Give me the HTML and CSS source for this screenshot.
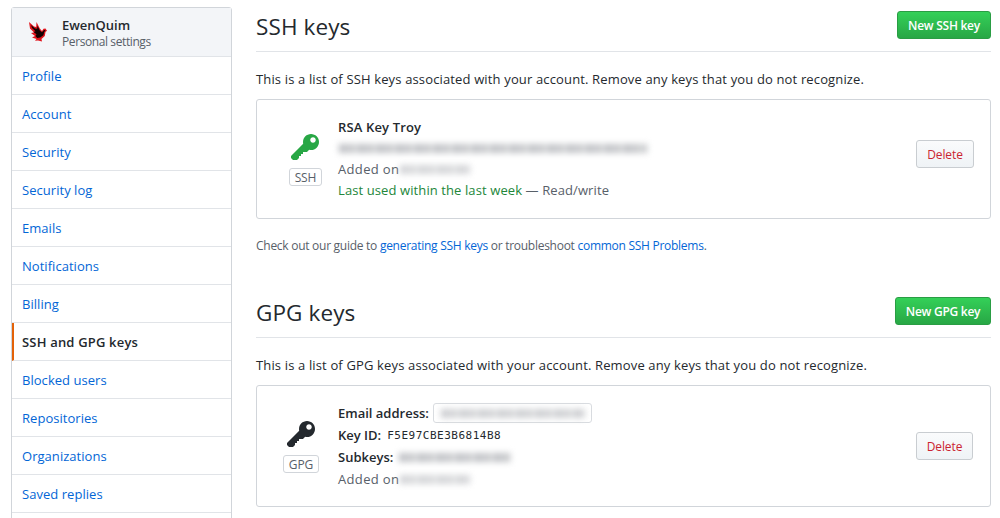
FILE: index.html
```html
<!DOCTYPE html>
<html lang="en">
<head>
<meta charset="utf-8">
<title>SSH and GPG keys</title>
<link rel="stylesheet" href="styles.css">
</head>
<body>
<div class="page">
  <nav class="menu">
    <div class="menu-header">
      <svg class="avatar" viewBox="0 0 20 22" width="20" height="22"><path d="M1 1l5 4.500L8.200 6 8.500 1l3.300 6.500L14 10l1.500-2.200 2-.3 1.500 2.300-1.500 1.200-.7 4-3.300 3L14 20.500 10 19.500l-3 .3 1.500-1.800L4 16.500l3-1.500L3 12l3-.5L2 7.500z" fill="#e0141c"/><path d="M3 4l4 3.500 2.200.2.300-3 2.300 4.800 2.200 1.800 2-2.300h1.500l-1.300 2.200-.8 3-3.200 2.400-3 .4L7.500 15l1-1.800L5.500 11l2-.8L4 7z" fill="#140202"/></svg>
      <div class="who"><strong class="name">EwenQuim</strong><span class="sub">Personal settings</span></div>
    </div>
    <a class="item">Profile</a>
    <a class="item">Account</a>
    <a class="item">Security</a>
    <a class="item">Security log</a>
    <a class="item">Emails</a>
    <a class="item">Notifications</a>
    <a class="item">Billing</a>
    <a class="item selected">SSH and GPG keys</a>
    <a class="item">Blocked users</a>
    <a class="item">Repositories</a>
    <a class="item">Organizations</a>
    <a class="item">Saved replies</a>
  </nav>
  <main class="main">
    <section class="ssh">
      <header class="subhead"><h2 class="title">SSH keys</h2><button class="btn primary new-ssh">New SSH key</button></header>
      <p class="intro">This is a list of SSH keys associated with your account. Remove any keys that you do not recognize.</p>
      <div class="box ssh-box">
        <div class="kind">
          <svg class="key green" viewBox="0 0 14 16" width="28" height="32"><path fill-rule="evenodd" d="M12.830 2.170C12.080 1.420 11.140 1.030 10 1c-1.130.03-2.080.42-2.830 1.170S6.040 3.860 6.010 5c0 .3.03.59.09.89L0 12v1l1 1h2l1-1v-1h1v-1h1v-1h2l1.090-1.110c.3.08.59.110.910.110 1.140-.03 2.080-.42 2.830-1.170S13.970 6.140 14 5c-.03-1.140-.42-2.080-1.170-2.830zM11 5.380c-.77 0-1.380-.61-1.380-1.380 0-.77.61-1.380 1.380-1.380.77 0 1.380.61 1.380 1.380 0 .77-.61 1.380-1.380 1.380z"/></svg>
          <span class="badge">SSH</span>
        </div>
        <div class="details">
          <div class="line"><strong class="key-name">RSA Key Troy</strong></div>
          <div class="line"><span class="redacted fingerprint"></span></div>
          <div class="line muted"><span class="added">Added on</span><span class="redacted date"></span></div>
          <div class="line muted usage"><span class="recent">Last used within the last week</span> — Read/write</div>
        </div>
        <button class="btn danger">Delete</button>
      </div>
      <p class="note">Check out our guide to <a>generating SSH keys</a> or troubleshoot <a>common SSH Problems</a>.</p>
    </section>
    <section class="gpg">
      <header class="subhead"><h2 class="title">GPG keys</h2><button class="btn primary new-gpg">New GPG key</button></header>
      <p class="intro">This is a list of GPG keys associated with your account. Remove any keys that you do not recognize.</p>
      <div class="box gpg-box">
        <div class="kind">
          <svg class="key" viewBox="0 0 14 16" width="28" height="32"><path fill-rule="evenodd" d="M12.830 2.170C12.080 1.420 11.140 1.030 10 1c-1.130.03-2.080.42-2.830 1.170S6.040 3.860 6.010 5c0 .3.03.59.09.89L0 12v1l1 1h2l1-1v-1h1v-1h1v-1h2l1.090-1.110c.3.08.59.110.910.110 1.140-.03 2.080-.42 2.830-1.170S13.970 6.140 14 5c-.03-1.140-.42-2.080-1.170-2.830zM11 5.380c-.77 0-1.380-.61-1.380-1.380 0-.77.61-1.380 1.380-1.380.77 0 1.380.61 1.380 1.380 0 .77-.61 1.380-1.380 1.380z"/></svg>
          <span class="badge">GPG</span>
        </div>
        <div class="details">
          <div class="line"><strong class="label-email">Email address:</strong><span class="email-box"><span class="redacted email"></span></span></div>
          <div class="line"><strong class="label-id">Key ID:</strong><code class="key-id">F5E97CBE3B6814B8</code></div>
          <div class="line"><strong class="label-sub">Subkeys:</strong><span class="redacted subkeys"></span></div>
          <div class="line muted"><span class="added">Added on</span><span class="redacted date"></span></div>
        </div>
        <button class="btn danger">Delete</button>
      </div>
    </section>
  </main>
</div>
</body>
</html>
```
FILE: styles.css
```css
* { box-sizing: border-box; }
body { margin: 0; height: 518px; overflow: hidden; background: #fff; color: #24292e; font: 13px/22px "Open Sans", "Noto Sans", sans-serif; }
a { color: #0366d6; }
strong { font-weight: 600; }
.page { display: flex; gap: 24px; height: 518px; padding: 7px 9px 0 11px; overflow: hidden; white-space: nowrap; }

.menu { flex: none; width: 221px; height: 530px; border: 1px solid #d1d5da; border-radius: 3px; }
.menu-header { display: flex; gap: 14px; height: 49px; padding: 13px 0 0 16px; background: #f3f5f8; border-bottom: 1px solid #e1e4e8; }
.avatar { flex: none; }
.who { display: flex; flex-direction: column; margin-top: -4px; }
.name { line-height: 17px; }
.sub { font-size: 12px; line-height: 15px; color: #586069; letter-spacing: -0.4px; }
.item { display: block; height: 38px; padding: 9px 10px; line-height: 21px; letter-spacing: 0.04px; border-bottom: 1px solid #e1e4e8; }
.selected { padding-left: 8px; border-left: 2px solid #e36209; color: #24292e; font-weight: 600; letter-spacing: 0.18px; }

.main { flex: 1; min-width: 0; }
.subhead { display: flex; justify-content: space-between; align-items: flex-start; height: 45px; padding-top: 4px; border-bottom: 1px solid #e1e4e8; }
.title { margin: 0; font-size: 22.5px; line-height: 32px; font-weight: 400; letter-spacing: 0.1px; }
.intro { margin: 16px 0 9px; letter-spacing: 0.145px; }
.btn { height: 28px; padding: 1px 0 0; border: 1px solid #c9cdd1; border-radius: 3px; font: 600 12px/20px "Open Sans", sans-serif; letter-spacing: -0.27px; }
.primary { color: #fff; border-color: #2a9d44; background: linear-gradient(#34d058, #28a745); }
.new-ssh { width: 94px; }
.new-gpg { width: 96px; }
.danger { width: 58px; margin-left: auto; color: #cb2431; background: linear-gradient(#fafbfc, #eff3f6); font-weight: 500; letter-spacing: -0.1px; }
.gpg .danger { width: 57px; }
.box { display: flex; border: 1px solid #d1d5da; border-radius: 3px; }
.ssh-box { height: 120px; padding: 16px 16px 0 32px; }
.gpg-box { height: 122px; padding: 16px 17px 0 26px; }
.box .danger { margin-top: 24px; }
.gpg-box .danger { margin-top: 30px; }
.kind { display: flex; flex-direction: column; align-items: center; width: 33px; margin-right: 16px; padding-top: 16px; }
.ssh .key { margin-right: 2px; }
.gpg .kind { width: 36px; margin-right: 19px; padding-top: 17px; }
.key { flex: none; fill: #24292e; }
.green { fill: #28a745; }
.badge { width: 100%; height: 18px; margin-top: 4px; border: 1px solid #d1d5da; border-radius: 3px; color: #586069; font-size: 12px; line-height: 17px; letter-spacing: -0.1px; text-align: center; }
.details { padding-top: 1px; }
.key-name { letter-spacing: 0.15px; }
.gpg .details { padding-top: 0; }
.ssh .line { height: 21px; line-height: 21px; }
.line { display: flex; align-items: center; height: 22px; }
.muted { color: #586069; }
.usage { white-space: pre; letter-spacing: 0.1px; }
.recent { color: #22863a; }
.added { width: 62px; letter-spacing: 0.35px; }
.key-id { margin-left: 6px; padding-top: 2px; font: 11px/22px "DejaVu Sans Mono", monospace; letter-spacing: 0.5px; }
.email-box { display: flex; align-items: center; width: 159px; height: 20px; margin-left: 4px; padding-left: 7px; border: 1px solid #d9dce0; border-radius: 3px; }
.redacted { height: 9px; filter: blur(3px); background: repeating-linear-gradient(90deg, #bcbec2 0 7px, #d8d9dc 7px 9px, #c1c3c6 9px 15px, #dcdddf 15px 19px); }
.fingerprint { width: 308px; margin-left: 1px; }
.date { width: 70px; opacity: .7; }
.email { width: 144px; opacity: .8; }
.subkeys { width: 112px; margin-left: 6px; }
.note { margin: 17px 0 0; font-size: 12px; line-height: 20px; color: #586069; letter-spacing: -0.27px; }
.gpg { margin-top: 37px; }
```
